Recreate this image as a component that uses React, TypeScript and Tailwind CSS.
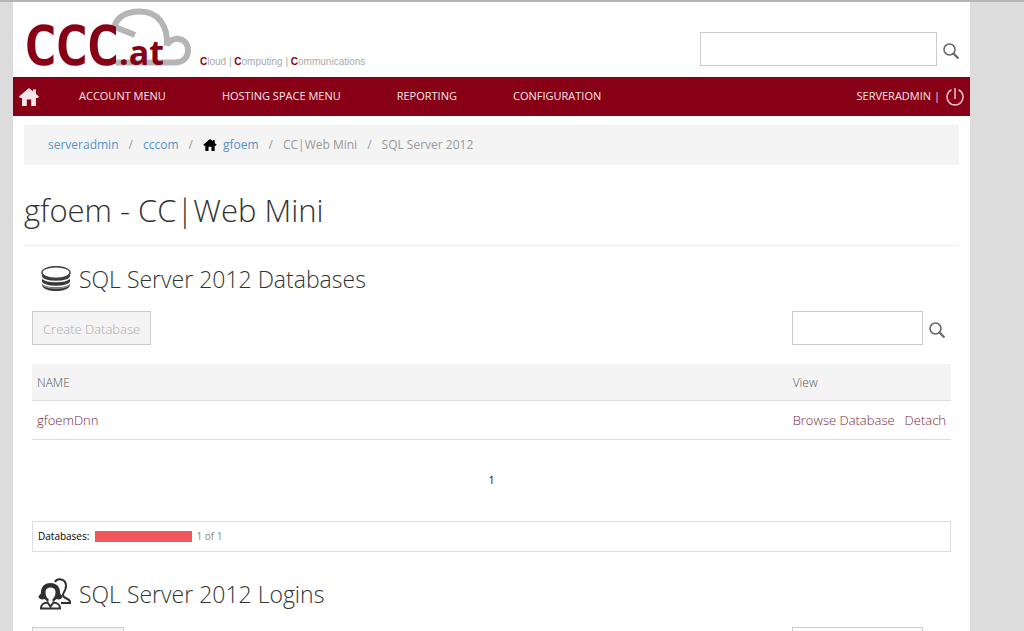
import { useState } from 'react';

const menuItems = ['Account Menu', 'Hosting Space Menu', 'Reporting', 'Configuration'];

const databases = [{ name: 'gfoemDnn' }];

const HomeIcon = ({ className }: { className: string }) => (
  <svg viewBox="0 0 20 18" className={className} fill="currentColor" aria-hidden="true">
    <path d="M10 0 0 8.500l1.200 1.500H3v8h4.800v-6.500h4.400V18H17v-8h1.800L20 8.500l-3-2.600V1.500h-3v1.900z" />
  </svg>
);

const SearchIcon = () => (
  <svg viewBox="0 0 16 16" className="size-4" fill="none" stroke="#666" aria-hidden="true">
    <circle cx="6.500" cy="6.500" r="5.500" strokeWidth="1.500" />
    <path d="m10.500 10.500 5 5" strokeWidth="2.200" />
  </svg>
);

const PowerIcon = () => (
  <svg viewBox="0 0 18 18" className="size-[18px]" fill="none" stroke="#e8b8c0" strokeWidth="1.600" aria-hidden="true">
    <path d="M5.500 1.700a8 8 0 1 0 7 0M9 0v11" />
  </svg>
);

const DatabaseIcon = () => (
  <svg viewBox="0 0 30 26" className="h-[26px] w-[30px]" aria-hidden="true">
    <path d="M1 6v13c1 8 27 8 28 0V6z" fill="#3a3a3a" />
    <path d="M0 10.500c3 6.500 27 6.500 30 0M0 15.500c3 6.500 27 6.500 30 0" fill="none" stroke="#fff" strokeWidth="1.500" />
    <path d="M1 18.500c3 5 25 5 28 0" fill="none" stroke="#aaa" strokeWidth="1" />
    <ellipse cx="15" cy="6.500" rx="14" ry="5.800" fill="#fff" stroke="#444" strokeWidth="1.500" />
  </svg>
);

const UsersIcon = () => (
  <svg viewBox="0 0 34 32" className="h-8 w-[34px]" aria-hidden="true">
    <path
      d="M17 4c2-4 11-4 11 4 0 5-3 6-3 9 0 4 7 3 7 7v1h-9"
      fill="#fff"
      stroke="#2f2f2f"
      strokeWidth="2"
    />
    <path
      d="M12.500 5C6 5 3 9.500 3 14c0 3-2.500 3-2.500 5 1 2.500 4 3 6 2l3 2.500h6l3-2.500c2 1 5 .5 6-2 0-2-2.500-2-2.500-5 0-4.500-3-9-9.500-9z"
      fill="#2f2f2f"
    />
    <path d="M7.500 14c0-3 2-4.500 5-4.500s5 1.500 5 4.500c0 3.500-1.200 6-3 7v4h-4v-4c-1.800-1-3-3.500-3-7z" fill="#fff" />
    <path
      d="M9.500 24.500c-4 .5-6.500 1.500-6.500 6h19c0-4.500-2.500-5.500-6.500-6l-3 4z"
      fill="#fff"
      stroke="#2f2f2f"
      strokeWidth="2"
    />
  </svg>
);

const Logo = () => (
  <a href="#" aria-label="CCC.at">
    <svg viewBox="0 0 168 69" className="h-[69px] w-[168px] overflow-visible">
      <path
        d="M90 20C93 8 103 3.500 116 3.500c18 0 28 14 27 34C146 28 164 28 164 42c0 8-5 12.500-14 12.500H92M91 19l20 8"
        fill="none"
        stroke="#b5b5b5"
        strokeWidth="6"
      />
      <g fill="#870015" fontFamily="DejaVu Sans Mono, monospace">
        <text x="1" y="56" fontSize="52" stroke="#870015" strokeWidth="2.500">CCC</text>
        <text x="95" y="57" fontSize="34" fontWeight="700" fontFamily="Open Sans, sans-serif">.at</text>
      </g>
    </svg>
  </a>
);

const SearchBox = ({ label, width }: { label: string; width: string }) => {
  const [query, setQuery] = useState('');
  return (
    <form className="flex items-center gap-1.5" onSubmit={(e) => e.preventDefault()}>
      <input
        type="text"
        aria-label={label}
        value={query}
        onChange={(e) => setQuery(e.target.value)}
        className={`${width} h-[34px] border border-[#ccc] bg-white px-2 text-sm outline-none`}
      />
      <button type="submit" aria-label="Search" className="pt-1">
        <SearchIcon />
      </button>
    </form>
  );
};

const Header = () => (
  <header>
    <div className="flex h-[75px] items-start justify-between px-[11px]">
      <div className="flex items-start gap-2 pt-1.5">
        <Logo />
        <p className="pt-[46px] font-['Liberation_Sans',sans-serif] text-[10px] leading-4 text-[#aaa]">
          <b className="text-[#870015]">C</b>loud | <b className="text-[#870015]">C</b>omputing |{' '}
          <b className="text-[#870015]">C</b>ommunications
        </p>
      </div>
      <div className="pt-[30px]">
        <SearchBox label="Search all" width="w-[237px]" />
      </div>
    </div>
    <nav className="flex h-[39px] items-center bg-[#870015] pl-1.5 pr-1.5 text-[11px] text-[#f7e6e9]">
      <a href="#" aria-label="Home" className="mr-10">
        <HomeIcon className="h-[18px] w-5" />
      </a>
      <ul className="flex gap-14">
        {menuItems.map((item) => (
          <li key={item}>
            <a href="#" className="uppercase">{item}</a>
          </li>
        ))}
      </ul>
      <div className="ml-auto flex items-center gap-1.5">
        <span>SERVERADMIN |</span>
        <button type="button" aria-label="Sign out">
          <PowerIcon />
        </button>
      </div>
    </nav>
  </header>
);

const Separator = () => <span className="px-2.5 text-[#999]">/</span>;

const Breadcrumb = () => (
  <nav aria-label="Breadcrumb" className="flex h-10 items-center bg-[#f4f4f4] pl-6 text-xs text-[#999]">
    <a href="#" className="text-[#5592c4]">serveradmin</a>
    <Separator />
    <a href="#" className="text-[#5592c4]">cccom</a>
    <Separator />
    <a href="#" className="flex items-center gap-1.5 text-[#5592c4]">
      <HomeIcon className="h-3 w-3.5 text-black" />
      gfoem
    </a>
    <Separator />
    <span>CC|Web Mini</span>
    <Separator />
    <span>SQL Server 2012</span>
  </nav>
);

const App = () => {
  return (
    <div className="border-t-2 border-[#b5b5b5] bg-[#dcdcdc] pl-[13px] pr-[54px] font-['Open_Sans',sans-serif]">
      <div className="min-h-screen bg-white">
        <Header />
        <main className="px-[11px] pt-[9px] pb-8">
          <Breadcrumb />
          <h1 className="mt-[21px] border-b border-[#eee] pb-[11px] text-[31px] leading-[48px] font-light text-[#333]">
            gfoem - CC|Web Mini
          </h1>
          <div className="px-2">
            <h2 className="mt-[17px] flex items-center gap-2 pl-[9px] text-[23px] leading-8 font-light text-[#333]">
              <DatabaseIcon />
              SQL Server 2012 Databases
            </h2>
            <div className="mt-4 flex items-center justify-between pr-1.5">
              <button type="button" className="h-[34px] border border-[#ccc] bg-[#f4f4f4] px-2.5 pt-1 text-[13px] font-light text-[#aaa]">
                Create Database
              </button>
              <SearchBox label="Search databases" width="w-[131px]" />
            </div>
            <table className="mt-[19px] w-full text-[13px] font-light text-[#555]">
              <thead>
                <tr className="h-9 border-b border-[#ddd] bg-[#f4f4f4] text-left text-xs">
                  <th className="pt-0.5 pl-[5px] font-light">NAME</th>
                  <th className="w-[157px] pt-0.5 font-light">View</th>
                </tr>
              </thead>
              <tbody>
                {databases.map((db) => (
                  <tr key={db.name} className="h-[39px] border-b border-[#ddd] text-[#7a2a38]">
                    <td className="pt-0.5 pl-[5px]">
                      <a href="#">{db.name}</a>
                    </td>
                    <td className="pt-0.5 pr-[5px]">
                      <div className="flex justify-end gap-2.5 whitespace-nowrap">
                        <a href="#">Browse Database</a>
                        <a href="#">Detach</a>
                      </div>
                    </td>
                  </tr>
                ))}
              </tbody>
            </table>
            <p className="mt-8 text-center text-[10px] leading-4 text-black">1</p>
            <div className="mt-[33px] flex h-[31px] items-center border border-[#ddd] px-[5px] text-[10px]">
              <span className="text-black">Databases:</span>
              <span className="ml-1.5 h-[11px] w-[97px] bg-[#f2555a]" />
              <span className="ml-1 text-[#888]">1 of 1</span>
            </div>
            <h2 className="mt-[26px] flex items-center gap-[7px] pl-1.5 text-[23px] leading-8 font-light text-[#333]">
              <UsersIcon />
              SQL Server 2012 Logins
            </h2>
            <div className="mt-[17px] flex items-center justify-between pr-1.5">
              <button type="button" className="h-[34px] border border-[#ccc] bg-[#f4f4f4] px-2 pt-1 text-[13px] font-light text-[#aaa]">
                Create Login
              </button>
              <SearchBox label="Search logins" width="w-[131px]" />
            </div>
          </div>
        </main>
      </div>
    </div>
  );
};

export default App;
